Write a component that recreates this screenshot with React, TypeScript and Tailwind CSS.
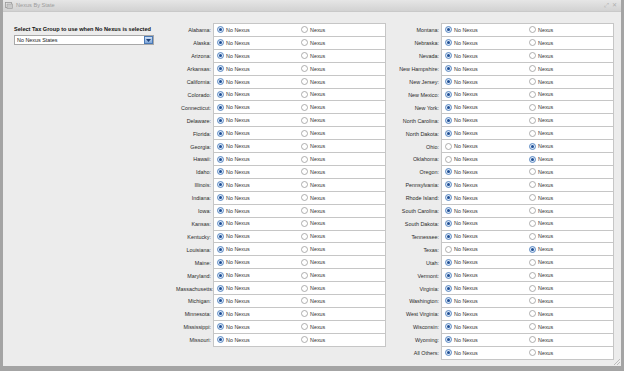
const LEFT = [
  'Alabama', 'Alaska', 'Arizona', 'Arkansas', 'California', 'Colorado', 'Connecticut', 'Delaware',
  'Florida', 'Georgia', 'Hawaii', 'Idaho', 'Illinois', 'Indiana', 'Iowa', 'Kansas', 'Kentucky',
  'Louisiana', 'Maine', 'Maryland', 'Massachusetts', 'Michigan', 'Minnesota', 'Mississippi', 'Missouri',
];

const RIGHT = [
  'Montana', 'Nebraska', 'Nevada', 'New Hampshire', 'New Jersey', 'New Mexico', 'New York',
  'North Carolina', 'North Dakota', 'Ohio', 'Oklahoma', 'Oregon', 'Pennsylvania', 'Rhode Island',
  'South Carolina', 'South Dakota', 'Tennessee', 'Texas', 'Utah', 'Vermont', 'Virginia', 'Washington',
  'West Virginia', 'Wisconsin', 'Wyoming', 'All Others',
];

const NEXUS = ['Ohio', 'Oklahoma', 'Texas'];

function Radio({ on }: { on: boolean }) {
  return (
    <svg width="7" height="7" viewBox="0 0 7 7" className="shrink-0">
      <circle cx="3.5" cy="3.5" r="3" fill={on ? '#dce8f7' : '#fff'} stroke={on ? '#3f73b5' : '#9a9a9a'} strokeWidth="0.8" />
      {on && <circle cx="3.5" cy="3.5" r="1.5" fill="#1f4f95" />}
    </svg>
  );
}

function Row({ name, labelW }: { name: string; labelW: string }) {
  const nexus = NEXUS.includes(name);
  return (
    <div className="flex h-[12.92px] items-center">
      <div className={`${labelW} shrink-0 pr-[2px] text-right whitespace-nowrap text-[#2a2a2a]`}>{name}:</div>
      <div className="flex h-full w-[173px] items-center border-x border-b border-[#c6c6c6] bg-white">
        <div className="flex w-[86px] items-center gap-[2px] pl-[3px]">
          <Radio on={!nexus} />
          <span>No Nexus</span>
        </div>
        <div className="flex items-center gap-[2px] pl-[1px]">
          <Radio on={nexus} />
          <span>Nexus</span>
        </div>
      </div>
    </div>
  );
}

function Column({ names, labelW }: { names: string[]; labelW: string }) {
  return (
    <div className="flex flex-col">
      <div className="flex">
        <div className={`${labelW} shrink-0`} />
        <div className="w-[173px] border-t border-[#c6c6c6]" />
      </div>
      {names.map((n) => (
        <Row key={n} name={n} labelW={labelW} />
      ))}
    </div>
  );
}

export default function App() {
  return (
    <div
      className="flex h-[371px] w-[624px] flex-col overflow-hidden border-x-[3px] border-b-[5px] border-[#a4a4a4] bg-[#ececec] text-[5.4px] text-[#333]"
      style={{ fontFamily: '"Liberation Sans", Arial, sans-serif' }}
    >
      <div className="flex h-[12px] shrink-0 items-center border-b border-[#c9c9c9] bg-gradient-to-b from-[#e6e6e6] to-[#d2d2d2] px-[2px]">
        <svg width="8" height="7" viewBox="0 0 8 7" className="mr-[3px]">
          <rect x="0.5" y="0.5" width="6" height="5" fill="#e9e9e9" stroke="#9a9a9a" strokeWidth="0.8" />
          <rect x="2" y="2" width="5.5" height="4.5" fill="#c9c9c9" stroke="#9a9a9a" strokeWidth="0.6" />
        </svg>
        <span className="text-[5.6px] text-[#9c9c9c]">Nexus By State</span>
        <div className="ml-auto flex items-center gap-[3px] pr-[2px] text-[6px] text-[#b0b0b0]">
          <span>⤢</span>
          <span>✕</span>
        </div>
      </div>
      <div className="flex flex-1 pt-[11px]">
        <div className="w-[173px] shrink-0 pl-[11px] pt-[2px]">
          <div className="text-[5.6px] font-bold leading-[8px] text-[#111]">Select Tax Group to use when No Nexus is selected</div>
          <div className="mt-[2px] flex h-[10px] w-[140px] items-center border border-[#a8a8a8] bg-white pl-[2px]">
            <span className="flex-1 text-[#222]">No Nexus States</span>
            <div className="flex h-[8px] w-[9px] items-center justify-center border border-[#4a79b5] bg-gradient-to-b from-[#cfe0f5] to-[#7ea6d9]">
              <svg width="5" height="3" viewBox="0 0 5 3">
                <path d="M0 0 L5 0 L2.5 3 Z" fill="#1c3f78" />
              </svg>
            </div>
          </div>
        </div>
        <Column names={LEFT} labelW="w-[37px]" />
        <Column names={RIGHT} labelW="w-[55px]" />
      </div>
      <div className="flex h-[4px] justify-end">
        <svg width="8" height="8" viewBox="0 0 8 8" className="-mt-[4px]">
          <path d="M7 1 L1 7 M7 4 L4 7" stroke="#b0b0b0" strokeWidth="0.8" />
        </svg>
      </div>
    </div>
  );
}
